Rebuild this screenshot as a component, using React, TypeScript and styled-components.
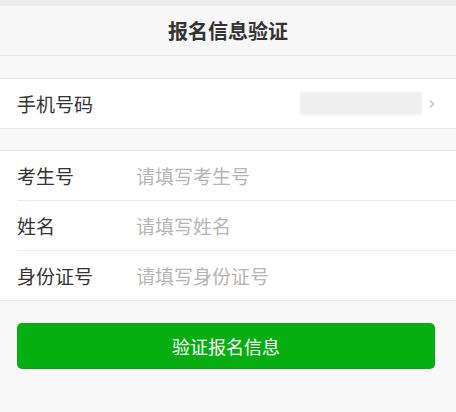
import styled, { createGlobalStyle } from "styled-components";

const GlobalStyle = createGlobalStyle`
  html, body {
    margin: 0;
    padding: 0;
    background: #f8f8f8;
    font-family: "Noto Sans CJK SC", "Noto Sans", sans-serif;
  }
`;

const Page = styled.div`
  width: 456px;
  height: 412px;
  background: #f8f8f8;
  overflow: hidden;
`;

const TopStrip = styled.div`
  height: 6px;
  background: #ececec;
`;

const Header = styled.div`
  height: 49px;
  display: flex;
  align-items: center;
  justify-content: center;
  background: #f7f7f7;
  border-bottom: 1px solid #e4e4e4;
  font-size: 20px;
  font-weight: 700;
  color: #333;
`;

const Group = styled.div<{ $top: number }>`
  margin-top: ${props => props.$top}px;
  background: #fff;
  border-top: 1px solid #e6e6e6;
  border-bottom: 1px solid #e6e6e6;
`;

const Row = styled.div<{ $first?: boolean }>`
  height: 49px;
  display: flex;
  align-items: center;
  margin-left: 17px;
  padding-right: 20px;
  border-top: ${props => (props.$first ? "none" : "1px solid #ebebeb")};
`;

const Label = styled.div`
  width: 119px;
  flex-shrink: 0;
  font-size: 19px;
  color: #333;
`;

const Input = styled.input`
  flex: 1;
  border: none;
  outline: none;
  background: transparent;
  padding: 0;
  font-family: inherit;
  font-size: 19px;
  color: #333;

  &::placeholder {
    color: #b5b5b5;
  }
`;

const Value = styled.div`
  margin-left: auto;
  width: 122px;
  height: 23px;
  background: #efefef;
  filter: blur(1px);
`;

const Chevron = styled.svg`
  margin-left: 6px;
  width: 8px;
  height: 10px;
`;

const Button = styled.button`
  display: block;
  width: 418px;
  height: 46px;
  margin: 22px 0 0 17px;
  border: none;
  border-radius: 5px;
  background: #06ae11;
  color: #fff;
  font-family: inherit;
  font-size: 18px;
`;

const fields = [
  { label: "考生号", placeholder: "请填写考生号" },
  { label: "姓名", placeholder: "请填写姓名" },
  { label: "身份证号", placeholder: "请填写身份证号" },
];

function App() {
  return (
    <Page>
      <GlobalStyle />
      <TopStrip />
      <Header>报名信息验证</Header>
      <Group $top={22}>
        <Row $first>
          <Label>手机号码</Label>
          <Value />
          <Chevron viewBox="0 0 8 10">
            <path d="M2 1.5 L5.5 5 L2 8.5" fill="none" stroke="#c4c4c4" strokeWidth="1.6" />
          </Chevron>
        </Row>
      </Group>
      <Group $top={21}>
        {fields.map((f, i) => (
          <Row key={f.label} $first={i === 0}>
            <Label>{f.label}</Label>
            <Input placeholder={f.placeholder} />
          </Row>
        ))}
      </Group>
      <Button>验证报名信息</Button>
    </Page>
  );
}

export default App;
